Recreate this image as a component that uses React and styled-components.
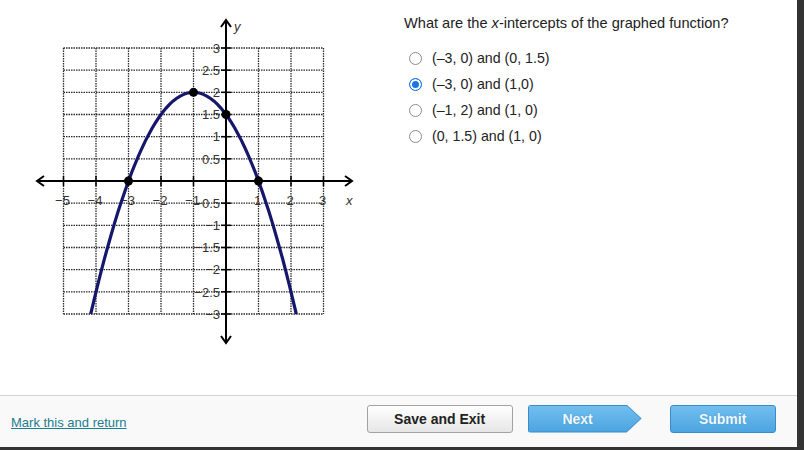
import React from "react";
import styled, { createGlobalStyle } from "styled-components";

const GlobalStyle = createGlobalStyle`
  html, body {
    margin: 0;
    padding: 0;
    background: #ffffff;
  }
  body {
    font-family: "Liberation Sans", Arial, sans-serif;
  }
`;

const Frame = styled.div`
  width: 804px;
  height: 450px;
  box-sizing: border-box;
  border-right: 7px solid #333333;
  border-bottom: 3px solid #333333;
  display: flex;
  flex-direction: column;
  background: #ffffff;
  overflow: hidden;
`;

const Main = styled.div`
  flex: 1;
  display: flex;
`;

const GraphArea = styled.div`
  width: 390px;
  flex-shrink: 0;
  svg {
    display: block;
  }
`;

const QuestionArea = styled.div`
  padding: 14px 0 0 14px;
  color: #222222;
`;

const Prompt = styled.div`
  font-size: 14.6px;
  line-height: 18px;
  em {
    font-style: italic;
  }
`;

const Options = styled.div`
  margin-top: 13px;
  display: flex;
  flex-direction: column;
`;

const Option = styled.label`
  height: 26px;
  display: flex;
  align-items: center;
  gap: 10px;
  font-size: 14.2px;
  color: #222222;
  padding-left: 5px;
`;

const Radio = styled.span`
  width: 11px;
  height: 11px;
  border-radius: 50%;
  border: 1px solid ${(p) => (p.checked ? "#1a73e8" : "#8c8c8c")};
  background: ${(p) => (p.checked ? "#1a73e8" : "#ffffff")};
  box-shadow: ${(p) => (p.checked ? "inset 0 0 0 2px #ffffff" : "none")};
  flex-shrink: 0;
`;

const Footer = styled.div`
  height: 52px;
  box-sizing: border-box;
  border-top: 1px solid #d2d2d2;
  background: #f9f9f9;
  display: flex;
  align-items: center;
  padding-bottom: 6px;
`;

const MarkLink = styled.a`
  margin: 8px 0 0 11px;
  font-size: 13px;
  color: #217d8e;
  text-decoration: underline;
  cursor: pointer;
`;

const SaveButton = styled.button`
  margin-left: 240px;
  width: 146px;
  height: 28px;
  border: 1px solid #a3a3a3;
  border-radius: 3px;
  background: linear-gradient(#ffffff, #e6e6e6);
  font-family: "Liberation Sans", Arial, sans-serif;
  font-size: 14px;
  font-weight: bold;
  color: #222222;
  padding: 0;
`;

const NextButton = styled.button`
  margin-left: 15px;
  width: 114px;
  height: 28px;
  border: none;
  padding: 1px;
  background: #3b8cc6;
  clip-path: polygon(0 0, calc(100% - 15px) 0, 100% 50%, calc(100% - 15px) 100%, 0 100%);
  border-radius: 3px 0 0 3px;
`;

const NextFace = styled.span`
  display: flex;
  align-items: center;
  justify-content: center;
  height: 100%;
  padding-right: 14px;
  box-sizing: border-box;
  background: linear-gradient(#71bff0, #4ca4df);
  clip-path: polygon(0 0, calc(100% - 14px) 0, 100% 50%, calc(100% - 14px) 100%, 0 100%);
  font-family: "Liberation Sans", Arial, sans-serif;
  font-size: 14px;
  font-weight: bold;
  color: #f2f9ff;
  text-shadow: 0 0 1px #3a88c0;
`;

const SubmitButton = styled.button`
  margin-left: 28px;
  width: 106px;
  height: 28px;
  border: 1px solid #3b8cc6;
  border-radius: 3px;
  background: linear-gradient(#71bff0, #4ca4df);
  font-family: "Liberation Sans", Arial, sans-serif;
  font-size: 14px;
  font-weight: bold;
  color: #f2f9ff;
  text-shadow: 0 0 1px #3a88c0;
  padding: 0;
`;

// graph coordinates
const px = (x) => 226 + x * 32.5;
const py = (y) => 181 - y * 44.33;

const xs = [-5, -4, -3, -2, -1, 0, 1, 2, 3];
const ys = [-3, -2.5, -2, -1.5, -1, -0.5, 0, 0.5, 1, 1.5, 2, 2.5, 3];

const fmt = (n) => (n < 0 ? "\u2212" + Math.abs(n) : String(n));

const curvePath = (() => {
  const pts = [];
  const a = -1 - Math.sqrt(10);
  const b = -1 + Math.sqrt(10);
  const steps = 60;
  for (let i = 0; i <= steps; i++) {
    const x = a + ((b - a) * i) / steps;
    const y = -0.5 * (x + 1) * (x + 1) + 2;
    pts.push(`${i === 0 ? "M" : "L"}${px(x).toFixed(1)} ${py(y).toFixed(1)}`);
  }
  return pts.join(" ");
})();

function Graph() {
  return (
    <svg width="390" height="395" viewBox="0 0 390 395">
      <g stroke="#2a2a2a" strokeWidth="1.3" strokeDasharray="1.5 1">
        {xs.map((x) => (
          <line key={"v" + x} x1={px(x)} y1={py(3)} x2={px(x)} y2={py(-3)} />
        ))}
        {ys.map((y) => (
          <line key={"h" + y} x1={px(-5)} y1={py(y)} x2={px(3)} y2={py(y)} />
        ))}
      </g>

      <g stroke="#000" strokeWidth="2" fill="none">
        <line x1="37" y1={py(0)} x2="352" y2={py(0)} />
        <line x1={px(0)} y1="20" x2={px(0)} y2="343" />
        <polyline points={`44,176 37,${py(0)} 44,186`} />
        <polyline points={`345,176 352,${py(0)} 345,186`} />
        <polyline points={`221,27 226,20 231,27`} />
        <polyline points={`221,336 226,343 231,336`} />
      </g>

      <g stroke="#000" strokeWidth="1.5">
        {xs.map((x) =>
          x === 0 ? null : (
            <line key={"tx" + x} x1={px(x)} y1={py(0) - 5} x2={px(x)} y2={py(0) + 5} />
          )
        )}
        {ys.map((y) =>
          y === 0 ? null : (
            <line key={"ty" + y} x1={px(0) - 5} y1={py(y)} x2={px(0) + 5} y2={py(y)} />
          )
        )}
      </g>

      <g fontFamily="Liberation Sans, Arial, sans-serif" fontSize="13" fill="#333">
        {xs.map((x) =>
          x === 0 ? null : (
            <text key={"lx" + x} x={px(x) - 1} y="205" textAnchor="middle">
              {fmt(x)}
            </text>
          )
        )}
        {ys.map((y) =>
          y === 0 ? null : (
            <text key={"ly" + y} x="220" y={py(y) + 4.8} textAnchor="end">
              {fmt(y)}
            </text>
          )
        )}
        <text x="346" y="205" fontStyle="italic" fontSize="13">x</text>
        <text x="234" y="31" fontStyle="italic" fontSize="13">y</text>
      </g>

      <path d={curvePath} stroke="#16166b" strokeWidth="3.2" fill="none" />

      <g fill="#000">
        <circle cx={px(-3)} cy={py(0)} r="4.5" />
        <circle cx={px(1)} cy={py(0)} r="4.5" />
        <circle cx={px(-1)} cy={py(2)} r="4.5" />
        <circle cx={px(0)} cy={py(1.5)} r="4.5" />
      </g>
    </svg>
  );
}

const choices = [
  { text: "(\u20133, 0) and (0, 1.5)", checked: false },
  { text: "(\u20133, 0) and (1,0)", checked: true },
  { text: "(\u20131, 2) and (1, 0)", checked: false },
  { text: "(0, 1.5) and (1, 0)", checked: false },
];

export default function App() {
  return (
    <>
      <GlobalStyle />
      <Frame>
        <Main>
          <GraphArea>
            <Graph />
          </GraphArea>
          <QuestionArea>
            <Prompt>
              What are the <em>x</em>-intercepts of the graphed function?
            </Prompt>
            <Options>
              {choices.map((c) => (
                <Option key={c.text}>
                  <Radio checked={c.checked} />
                  {c.text}
                </Option>
              ))}
            </Options>
          </QuestionArea>
        </Main>
        <Footer>
          <MarkLink>Mark this and return</MarkLink>
          <SaveButton>Save and Exit</SaveButton>
          <NextButton>
            <NextFace>Next</NextFace>
          </NextButton>
          <SubmitButton>Submit</SubmitButton>
        </Footer>
      </Frame>
    </>
  );
}
